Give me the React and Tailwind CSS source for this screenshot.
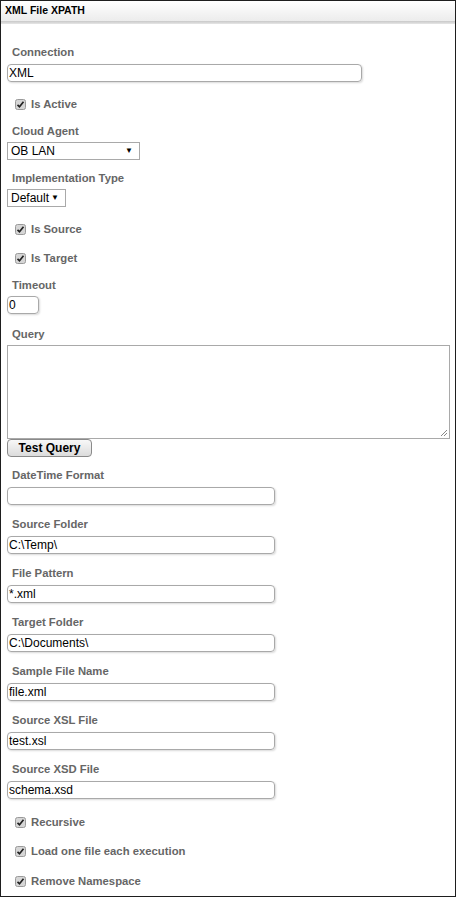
import React from "react";

const font = { fontFamily: '"Liberation Sans", Arial, sans-serif' };

function Check() {
  return (
    <svg width="11" height="11" viewBox="0 0 11 11" className="shrink-0">
      <rect x="0.5" y="0.5" width="10" height="10" rx="2" fill="#d6d6d6" stroke="#9a9a9a" />
      <path d="M2.5 5.8 L4.5 7.8 L8.5 2.8" fill="none" stroke="#222" strokeWidth="1.7" />
    </svg>
  );
}

function CheckRow({ label, className = "" }) {
  return (
    <div className={"flex items-center h-[14px] pl-[8px] " + className}>
      <Check />
      <span className="ml-[5px] text-[11.3px] leading-[14px] font-bold text-[#666]">{label}</span>
    </div>
  );
}

function Label({ children, className = "" }) {
  return (
    <div className={"pl-[5px] text-[11.3px] leading-[14px] font-bold text-[#666] " + className}>
      {children}
    </div>
  );
}

function TextInput({ value = "", w, className = "" }) {
  return (
    <div
      className={
        "h-[18px] border border-[#a9a9a9] rounded-[4px] shadow-[1px_1px_2px_rgba(0,0,0,0.15)] pl-[1px] text-[12px] leading-[16px] text-black " +
        w +
        " " +
        className
      }
    >
      {value}
    </div>
  );
}

function Select({ value, w, className = "" }) {
  return (
    <div
      className={
        "h-[18px] border border-[#a9a9a9] flex items-center justify-between pl-[3px] pr-[6px] text-[12px] text-black " +
        w +
        " " +
        className
      }
    >
      <span>{value}</span>
      <span className="text-[8px]">▼</span>
    </div>
  );
}

export default function App() {
  return (
    <div style={font} className="w-[456px] h-[897px] border border-[#1e1e1e] bg-white overflow-hidden">
      {/* header */}
      <div className="h-[20px] bg-gradient-to-b from-white to-[#ececec] pl-[4px] flex items-center text-[10.5px] font-bold text-black">
        XML File XPATH
      </div>
      <div className="h-[3px] bg-gradient-to-b from-[#c8c8c8] to-[#e6e6e6]" />

      <div className="pl-[6px]">
        <Label className="mt-[21px]">Connection</Label>
        <TextInput value="XML" w="w-[355px]" className="mt-[5px]" />

        <CheckRow label="Is Active" className="mt-[15px]" />

        <Label className="mt-[13px]">Cloud Agent</Label>
        <Select value="OB LAN" w="w-[133px]" className="mt-[4px]" />

        <Label className="mt-[11px]">Implementation Type</Label>
        <Select value="Default" w="w-[59px]" className="mt-[4px]" />

        <CheckRow label="Is Source" className="mt-[15px]" />
        <CheckRow label="Is Target" className="mt-[15px]" />

        <Label className="mt-[13px]">Timeout</Label>
        <TextInput value="0" w="w-[32px]" className="mt-[4px]" />

        <Label className="mt-[13px]">Query</Label>
        <div className="relative mt-[4px] w-[443px] h-[94px] border border-[#a9a9a9]">
          <svg width="8" height="8" viewBox="0 0 8 8" className="absolute right-[1px] bottom-[1px]">
            <path d="M7 1 L1 7 M7 4 L4 7" stroke="#888" strokeWidth="1" />
          </svg>
        </div>
        <button className="block w-[85px] h-[18px] border border-[#8a8a8a] rounded-[4px] bg-gradient-to-b from-[#f8f8f8] to-[#dcdcdc] text-[12px] leading-[16px] font-bold text-black">
          Test Query
        </button>

        <Label className="mt-[11px]">DateTime Format</Label>
        <TextInput w="w-[268px]" className="mt-[5px]" />

        <Label className="mt-[12px]">Source Folder</Label>
        <TextInput value="C:\Temp\" w="w-[268px]" className="mt-[5px]" />

        <Label className="mt-[12px]">File Pattern</Label>
        <TextInput value="*.xml" w="w-[268px]" className="mt-[5px]" />

        <Label className="mt-[12px]">Target Folder</Label>
        <TextInput value="C:\Documents\" w="w-[268px]" className="mt-[5px]" />

        <Label className="mt-[12px]">Sample File Name</Label>
        <TextInput value="file.xml" w="w-[268px]" className="mt-[5px]" />

        <Label className="mt-[12px]">Source XSL File</Label>
        <TextInput value="test.xsl" w="w-[268px]" className="mt-[5px]" />

        <Label className="mt-[12px]">Source XSD File</Label>
        <TextInput value="schema.xsd" w="w-[268px]" className="mt-[5px]" />

        <CheckRow label="Recursive" className="mt-[16px]" />
        <CheckRow label="Load one file each execution" className="mt-[15px]" />
        <CheckRow label="Remove Namespace" className="mt-[16px]" />
      </div>
    </div>
  );
}
